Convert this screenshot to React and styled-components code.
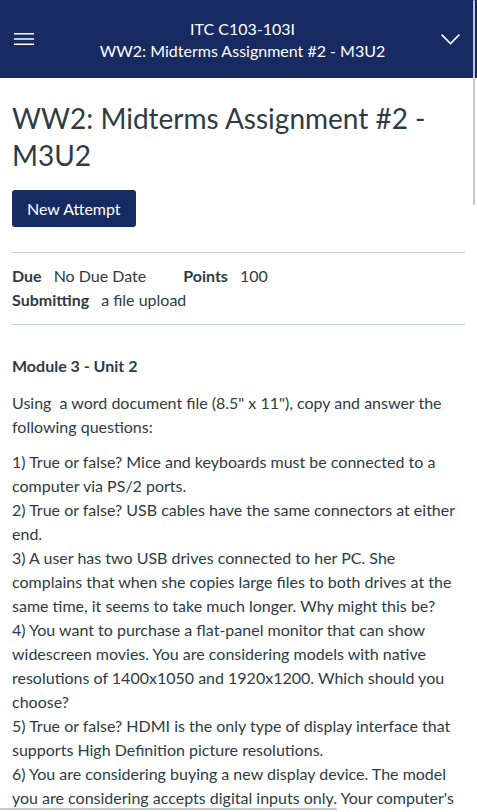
import React from "react";
import styled, { createGlobalStyle } from "styled-components";

const Global = createGlobalStyle`
  html, body { margin: 0; padding: 0; background: #fff; }
  body {
    font-family: Lato, "Noto Sans", "Liberation Sans", sans-serif;
    color: #2d3b45;
    overflow: hidden;
  }
  * { box-sizing: border-box; }
`;

const Header = styled.header`
  height: 78px;
  background: #172b62;
  color: #fff;
  display: flex;
  align-items: center;
`;

const IconButton = styled.button`
  width: ${(p) => p.$w}px;
  height: 78px;
  flex: none;
  border: 0;
  background: transparent;
  color: #fff;
  display: flex;
  align-items: center;
  justify-content: center;
  padding: 0;
  padding-left: ${(p) => p.$pl || 0}px;
  padding-right: ${(p) => p.$pr || 0}px;
`;

const HeaderTitle = styled.div`
  flex: 1;
  min-width: 0;
  text-align: center;
  font-size: 16px;
  line-height: 22px;
  padding-top: 1px;
`;

const Main = styled.main`
  padding: 0 12px;
`;

const Title = styled.h1`
  margin: 22px 0 0;
  font-size: 28px;
  font-weight: 400;
  line-height: 37px;
  color: #2d3b45;
`;

const Button = styled.button`
  margin-top: 16px;
  height: 37px;
  padding: 0 15px;
  background: #162b62;
  color: #fff;
  border: 0;
  border-radius: 3px;
  font-family: inherit;
  font-size: 16px;
`;

const Rule = styled.hr`
  border: 0;
  border-top: 1px solid #c7cdd1;
  margin: ${(p) => p.$m || "0"};
`;

const Details = styled.div`
  padding: 11px 0 12px;
  font-size: 16px;
  line-height: 24px;
`;

const DetailRow = styled.div`
  display: flex;
  gap: 37px;
`;

const Detail = styled.span`
  display: inline-flex;
  gap: 12px;
`;

const Label = styled.strong`
  font-weight: 700;
`;

const Body = styled.div`
  padding-top: 29px;
  font-size: 16px;
  line-height: 24px;
`;

const ModuleTitle = styled.p`
  margin: 0 0 13px;
  font-weight: 700;
`;

const Para = styled.p`
  margin: 0 0 11px;
`;

const VScroll = styled.div`
  position: fixed;
  top: 0;
  right: 2px;
  width: 2px;
  height: 205px;
  background: #c8c8c8;
  border-radius: 1px;
`;

const HScroll = styled.div`
  position: fixed;
  left: 0;
  bottom: 2px;
  width: 337px;
  height: 2px;
  background: #c8c8c8;
  border-radius: 1px;
`;

const Hamburger = () => (
  <svg width="20" height="12" viewBox="0 0 20 12" fill="none" stroke="#fff" strokeWidth="1.5">
    <line x1="0" y1="0.75" x2="20" y2="0.75" />
    <line x1="0" y1="6" x2="20" y2="6" />
    <line x1="0" y1="11.25" x2="20" y2="11.25" />
  </svg>
);

const Chevron = () => (
  <svg width="19" height="11" viewBox="0 0 19 11" fill="none" stroke="#fff" strokeWidth="1.6">
    <polyline points="0.6,0.6 9.5,9.6 18.4,0.6" />
  </svg>
);

export default function App() {
  return (
    <>
      <Global />
      <Header>
        <IconButton $w={50} $pr={2}>
          <Hamburger />
        </IconButton>
        <HeaderTitle>
          <div>ITC C103-103I</div>
          <div>WW2: Midterms Assignment #2 - M3U2</div>
        </HeaderTitle>
        <IconButton $w={42} $pr={12}>
          <Chevron />
        </IconButton>
      </Header>
      <Main>
        <Title>WW2: Midterms Assignment #2 - M3U2</Title>
        <Button>New Attempt</Button>
        <Rule $m="25px 0 0" />
        <Details>
          <DetailRow>
            <Detail>
              <Label>Due</Label>
              <span>No Due Date</span>
            </Detail>
            <Detail>
              <Label>Points</Label>
              <span>100</span>
            </Detail>
          </DetailRow>
          <DetailRow>
            <Detail>
              <Label>Submitting</Label>
              <span>a file upload</span>
            </Detail>
          </DetailRow>
        </Details>
        <Rule />
        <Body>
          <ModuleTitle>Module 3 - Unit 2</ModuleTitle>
          <Para>Using&nbsp; a word document file (8.5" x 11"), copy and answer the following questions:</Para>
          <Para>
            1) True or false? Mice and keyboards must be connected to a computer via PS/2 ports.
            <br />
            2) True or false? USB cables have the same connectors at either end.
            <br />
            3) A user has two USB drives connected to her PC. She complains that when she copies large files to both drives at the same time, it seems to take much longer. Why might this be?
            <br />
            4) You want to purchase a flat-panel monitor that can show widescreen movies. You are considering models with native resolutions of 1400x1050 and 1920x1200. Which should you choose?
            <br />
            5) True or false? HDMI is the only type of display interface that supports High Definition picture resolutions.
            <br />
            6) You are considering buying a new display device. The model you are considering accepts digital inputs only. Your computer's graphics adapter has analog outputs only. What can you do?
          </Para>
        </Body>
      </Main>
      <VScroll />
      <HScroll />
    </>
  );
}
